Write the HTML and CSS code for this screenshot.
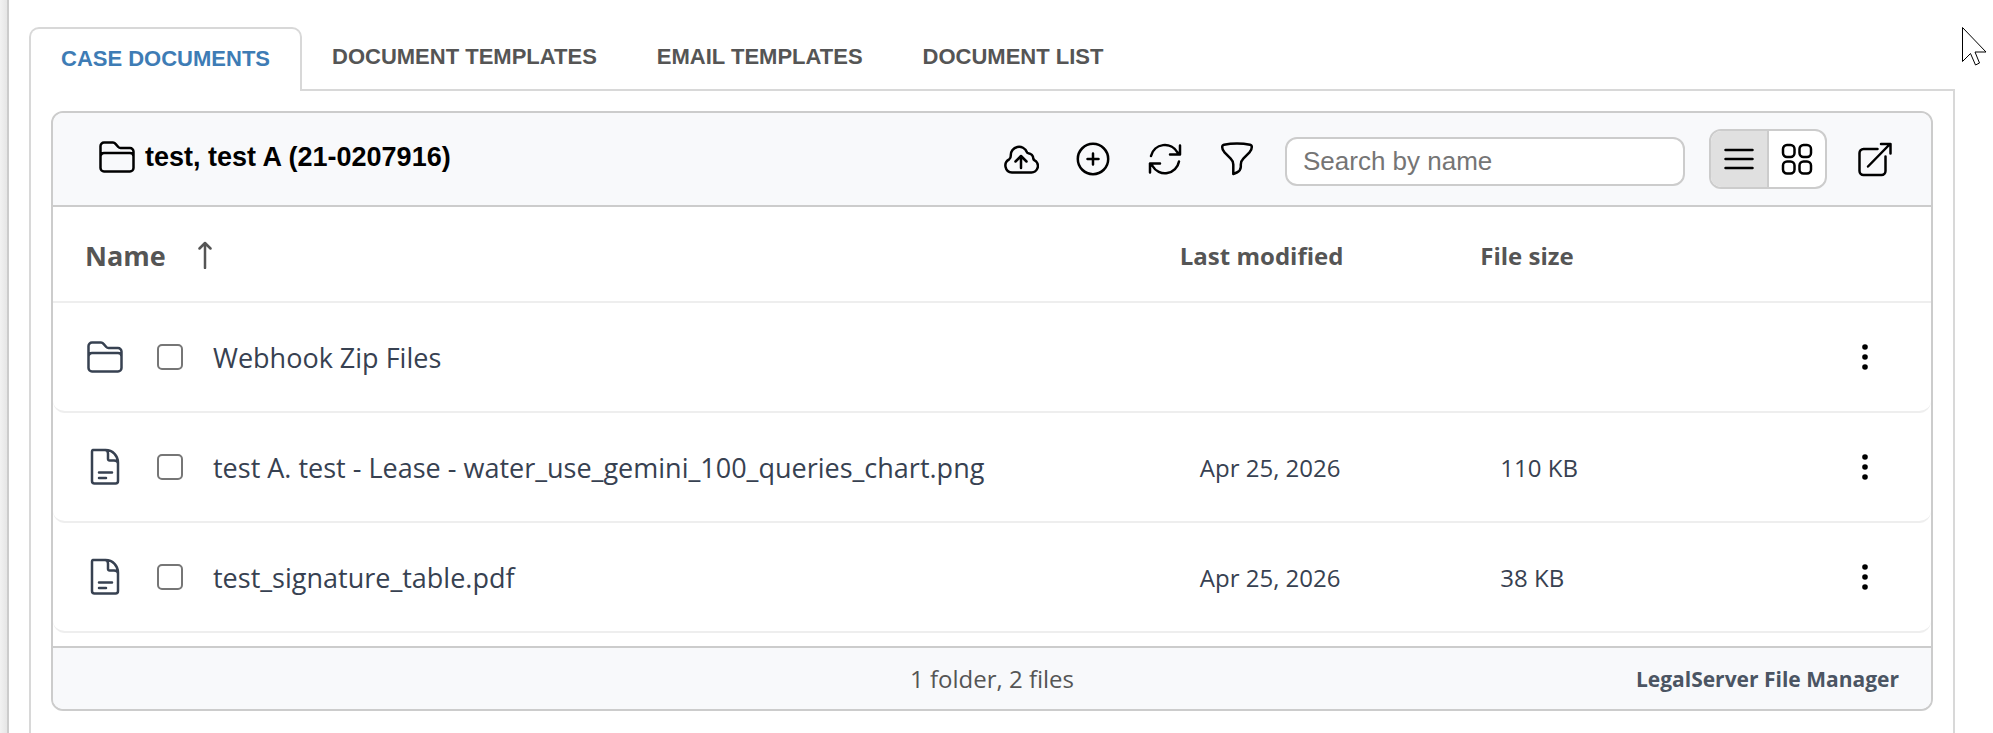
FILE: index.html
```html
<!DOCTYPE html>
<html lang="en">
<head>
<meta charset="utf-8">
<title>Case Documents</title>
<link rel="stylesheet" href="styles.css">
</head>
<body>
<svg class="sprite" aria-hidden="true">
  <symbol id="folder" viewBox="0 0 36 32">
    <path d="M1.500 15.500V5a3.500 3.500 0 0 1 3.500-3.500h9a3 3 0 0 1 2.300 1.100l3 3.400a3 3 0 0 0 2.300 1H31a3.500 3.500 0 0 1 3.500 3.500V27a3.500 3.500 0 0 1-3.500 3.500H5A3.500 3.500 0 0 1 1.500 27V15.500A3.500 3.500 0 0 1 5 12h26a3.500 3.500 0 0 1 3.500 3.500"/>
  </symbol>
  <symbol id="file" viewBox="0 0 30 38">
    <path d="M3 2h12.500C23 2 28 8 28 14.500V33a2.500 2.500 0 0 1-2.500 2.500h-21A2.500 2.500 0 0 1 2 33V3.500A1.500 1.500 0 0 1 3 2zM15 2c2 0 3 1.500 3 3.500V11a1.500 1.500 0 0 0 1.500 1.500H24c2.500 0 4 1 4 3M9 24.500h13M9 30h7"/>
  </symbol>
  <symbol id="dots" viewBox="0 0 8 28">
    <circle cx="4" cy="4" r="2.800"/><circle cx="4" cy="14" r="2.800"/><circle cx="4" cy="24" r="2.800"/>
  </symbol>
</svg>
<div class="page">
  <nav class="tabs">
    <a class="tab tab-active" href="#case">CASE DOCUMENTS</a>
    <a class="tab" href="#templates">DOCUMENT TEMPLATES</a>
    <a class="tab" href="#email">EMAIL TEMPLATES</a>
    <a class="tab" href="#list">DOCUMENT LIST</a>
  </nav>
  <main class="panel">
    <section class="manager">
      <header class="toolbar">
        <h1 class="title"><svg class="icon folder-icon"><use href="#folder"/></svg>test, test A (21-0207916)</h1>
        <div class="actions">
          <button class="tool" aria-label="Upload"><svg class="icon" viewBox="0 0 36 36"><path d="M9 31.500h19a6.500 6.500 0 0 0 3.300-12.300 2.500 2.500 0 0 1-1-1.700 5.500 5.500 0 0 0-5-5.300c-1 0-1.300-.4-1.500-1.200a8.300 8.300 0 0 0-16 3.500c0 2-.3 2.900-1.600 3.800A7 7 0 0 0 9 31.500zM18 27V15M12.500 20.500 18 15l5.500 5.500"/></svg></button>
          <button class="tool" aria-label="Add"><svg class="icon" viewBox="0 0 36 36"><circle cx="18" cy="18" r="15.200"/><path d="M18 12.500v11M12.500 18h11"/></svg></button>
          <button class="tool" aria-label="Refresh"><svg class="icon" viewBox="0 0 36 36"><path d="M4 15a14.300 14.300 0 0 1 26.500-3.500l2.500 2M33 4.500v9H23M32 20.500A14.300 14.300 0 0 1 5.500 25L3 22.500M3 31.500v-9h10"/></svg></button>
          <button class="tool" aria-label="Filter"><svg class="icon" viewBox="0 0 36 36"><path d="M18 2.500c-4.500 0-9 .4-13 1.200a2.300 2.300 0 0 0-1.800 2.200c0 2.300.8 4 2.300 5.500l6.200 6.200a8.500 8.500 0 0 1 2.600 6V33l3.500-1.500a6.500 6.500 0 0 0 4-5.500v-2.400a8.500 8.500 0 0 1 2.500-6l6.200-6.200A7.700 7.700 0 0 0 32.800 6 2.300 2.300 0 0 0 31 3.700c-4-.8-8.500-1.200-13-1.200z"/></svg></button>
          <input class="search" type="search" placeholder="Search by name" aria-label="Search by name">
          <div class="views">
            <button class="view view-active" aria-label="List view"><svg class="icon" viewBox="0 0 36 36"><path d="M4.500 9h27M4.500 18h27M4.500 27h27"/></svg></button>
            <button class="view" aria-label="Grid view"><svg class="icon" viewBox="0 0 36 36"><rect x="4" y="4" width="11.500" height="12" rx="4"/><rect x="20.500" y="4" width="11.500" height="12" rx="4"/><rect x="4" y="20.500" width="11.500" height="12" rx="4"/><rect x="20.500" y="20.500" width="11.500" height="12" rx="4"/></svg></button>
          </div>
          <button class="tool" aria-label="Open in new window"><svg class="icon" viewBox="0 0 36 36"><path d="M20.500 8H6.500A4 4 0 0 0 2.500 12v18a4 4 0 0 0 4 4h18a4 4 0 0 0 4-4V15.500M11 25.500 33 3M24 3h9.500v9.500"/></svg></button>
        </div>
      </header>
      <table class="files">
        <thead>
          <tr>
            <th class="col-name"><button class="sort">Name<svg class="icon arrow" viewBox="0 0 14 28"><path d="M7 27V2M1.500 7.500 7 2l5.500 5.500"/></svg></button></th>
            <th class="col-meta">Last modified</th>
            <th class="col-meta">File size</th>
            <th class="col-menu"></th>
          </tr>
        </thead>
        <tbody>
          <tr>
            <td><div class="entry"><svg class="icon folder-icon"><use href="#folder"/></svg><input class="check" type="checkbox" id="f1"><label for="f1">Webhook Zip Files</label></div></td>
            <td class="meta"></td>
            <td class="meta"></td>
            <td class="menu"><button class="more" aria-label="More"><svg class="dots"><use href="#dots"/></svg></button></td>
          </tr>
          <tr>
            <td><div class="entry"><svg class="icon file-icon"><use href="#file"/></svg><input class="check" type="checkbox" id="f2"><label for="f2">test A. test - Lease - water_use_gemini_100_queries_chart.png</label></div></td>
            <td class="meta">Apr 25, 2026</td>
            <td class="meta">110 KB</td>
            <td class="menu"><button class="more" aria-label="More"><svg class="dots"><use href="#dots"/></svg></button></td>
          </tr>
          <tr>
            <td><div class="entry"><svg class="icon file-icon"><use href="#file"/></svg><input class="check" type="checkbox" id="f3"><label for="f3">test_signature_table.pdf</label></div></td>
            <td class="meta">Apr 25, 2026</td>
            <td class="meta">38 KB</td>
            <td class="menu"><button class="more" aria-label="More"><svg class="dots"><use href="#dots"/></svg></button></td>
          </tr>
        </tbody>
      </table>
      <footer class="status">
        <span class="count">1 folder, 2 files</span>
        <strong class="brand">LegalServer File Manager</strong>
      </footer>
    </section>
  </main>
</div>
<svg class="cursor" viewBox="0 0 26 42" aria-hidden="true"><path d="M.5 1.500v34l8-8 5 11.500 4-2-4.500-11h11z"/></svg>
</body>
</html>
```
FILE: styles.css
```css
* { box-sizing: border-box; }

body {
  margin: 0;
  min-height: 100vh;
  display: flex;
  background: linear-gradient(to right, #f2f2f2, #e6e6e6 7px);
  font-family: "Open Sans", "Noto Sans", sans-serif;
  color: #374151;
}

button {
  padding: 0;
  border: 0;
  background: none;
  color: inherit;
  font: inherit;
}

.sprite { position: absolute; width: 0; height: 0; }

.icon {
  width: 36px;
  height: 36px;
  flex: none;
  fill: none;
  stroke: currentColor;
  stroke-width: 2.500;
  stroke-linecap: round;
  stroke-linejoin: round;
}

.page {
  flex: 1;
  display: flex;
  flex-direction: column;
  margin-left: 7px;
  padding: 27px 38px 0 20px;
  border-left: 2px solid #ccc;
  background: #fff;
}

.tabs { display: flex; }

.tab {
  padding: 0 30px;
  border-bottom: 2px solid #d8d8d8;
  font: bold 22px/60px "Liberation Sans", Arial, sans-serif;
  color: #555;
  text-decoration: none;
}

.tabs::after {
  content: "";
  flex: 1;
  border-bottom: 2px solid #d8d8d8;
}

.tab-active {
  padding-bottom: 2px;
  border: 2px solid #d8d8d8;
  border-bottom: 0;
  border-radius: 10px 10px 0 0;
  color: #3e7cb5;
}

.panel {
  flex: 1;
  padding: 20px;
  border: solid #d8d8d8;
  border-width: 0 2px;
}

.manager {
  border: 2px solid #ccc;
  border-radius: 12px;
  overflow: hidden;
}

.toolbar {
  display: flex;
  align-items: center;
  justify-content: space-between;
  height: 94px;
  padding: 0 38px 0 46px;
  border-bottom: 2px solid #ccc;
  background: #f8f9fb;
  color: #000;
}

.title {
  display: flex;
  align-items: center;
  gap: 10px;
  margin: 0;
  padding-bottom: 4px;
  font: bold 27px/32px "Liberation Sans", Arial, sans-serif;
}

.folder-icon { height: 32px; }

.file-icon {
  width: 30px;
  height: 38px;
  margin: 0 3px;
}

.actions { display: flex; align-items: center; }

.tool { display: flex; margin-right: 36px; }

.tool:last-child { margin-right: 0; }

.search {
  width: 400px;
  height: 49px;
  margin: 4px 24px 0 -6px;
  padding: 0 16px;
  border: 2px solid #ccc;
  border-radius: 12px;
  background: #fff;
  font: 26px "Liberation Sans", Arial, sans-serif;
}

.search::placeholder { color: #757575; }

.views {
  display: flex;
  margin-right: 30px;
  border: 2px solid #ccc;
  border-radius: 12px;
  overflow: hidden;
  background: #fff;
}

.view { display: flex; padding: 10px; }

.view-active {
  border-right: 2px solid #ccc;
  background: #e0e0e0;
}

.files {
  width: 100%;
  margin-bottom: 13px;
  border-spacing: 0;
  table-layout: fixed;
}

th {
  height: 96px;
  padding: 2px 0 0;
  border-bottom: 2px solid #eee;
  font-size: 24px;
  font-weight: 700;
  text-align: left;
  color: #555;
}

.col-name { width: 60%; padding-left: 32px; }
.col-meta { width: 16%; }
.col-menu { width: 8%; }

.sort {
  display: flex;
  align-items: center;
  gap: 32px;
  font-size: 27px;
  font-weight: 700;
}

.arrow { width: 14px; height: 28px; }

td {
  height: 110px;
  padding: 0;
  border-bottom: 2px solid #eee;
}

td:first-child { padding-left: 34px; border-bottom-left-radius: 12px; }
td:last-child { border-bottom-right-radius: 12px; }

.entry {
  display: flex;
  align-items: center;
  font-size: 27px;
  white-space: nowrap;
}

.check {
  appearance: none;
  width: 26px;
  height: 26px;
  margin: 0 30px 0 34px;
  border: 2px solid #767676;
  border-radius: 5px;
  background: #fff;
}

.meta { padding-left: 20px; font-size: 24px; }

.menu { padding-right: 62px; }

.more { display: flex; margin-left: auto; color: #000; }

.dots { width: 8px; height: 28px; fill: currentColor; }

.status {
  display: grid;
  grid-template-columns: 1fr auto 1fr;
  align-items: center;
  height: 63px;
  padding: 0 32px;
  border-top: 2px solid #ccc;
  background: #f8f9fb;
  color: #4b5563;
}

.count { grid-column: 2; font-size: 24px; color: #555; }

.brand { justify-self: end; font-size: 21px; }

.cursor {
  position: absolute;
  top: 26px;
  right: 5px;
  width: 26px;
  height: 42px;
  fill: #fff;
  stroke: #000;
}
```
